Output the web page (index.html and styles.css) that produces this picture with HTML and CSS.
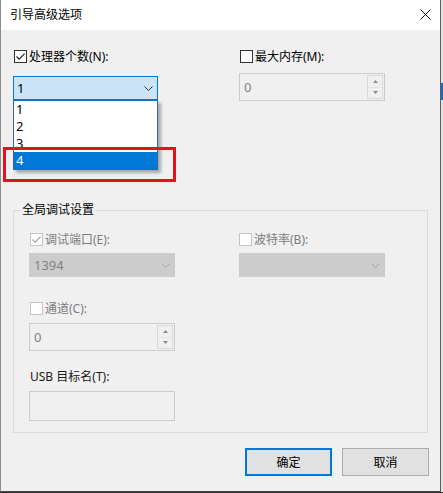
FILE: index.html
```html
<!DOCTYPE html>
<html lang="zh-CN">
<head>
<meta charset="utf-8">
<title>引导高级选项</title>
<link rel="stylesheet" href="styles.css">
</head>
<body>
<div class="screen">
  <div class="window">
    <div class="titlebar">
      <span class="title">引导高级选项</span>
      <svg class="close" width="11" height="11" viewBox="0 0 11 11"><path d="M0.5 0.5 L10.5 10.5 M10.5 0.5 L0.5 10.5" stroke="#111" stroke-width="1" fill="none"/></svg>
    </div>
    <div class="content">
      <div class="top">
        <div class="col">
          <div class="chk">
            <span class="box"><svg width="11" height="11" viewBox="0 0 11 11"><path d="M1.5 5.5 L4.2 8.2 L9.6 2.6" stroke="#222" stroke-width="1.2" fill="none"/></svg></span>
            <span>处理器个数(N):</span>
          </div>
          <div class="combo active">
            <span>1</span>
            <svg class="chev" width="9" height="5" viewBox="0 0 9 5"><path d="M0.5 0.5 L4.5 4.5 L8.5 0.5" stroke="#333" stroke-width="1" fill="none"/></svg>
            <ul class="droplist">
              <li>1</li>
              <li>2</li>
              <li>3</li>
              <li class="sel">4</li>
            </ul>
          </div>
        </div>
        <div class="col">
          <div class="chk">
            <span class="box"></span>
            <span>最大内存(M):</span>
          </div>
          <div class="spin">
            <span class="val">0</span>
            <div class="updown">
              <span class="half"><svg width="5" height="3" viewBox="0 0 5 3"><path d="M0 3 L2.5 0 L5 3Z" fill="#8a8a8a"/></svg></span>
              <span class="half"><svg width="5" height="3" viewBox="0 0 5 3"><path d="M0 0 L2.5 3 L5 0Z" fill="#8a8a8a"/></svg></span>
            </div>
          </div>
        </div>
      </div>

      <fieldset class="group">
        <legend>全局调试设置</legend>
        <div class="inner">
          <div class="ggrid">
            <div class="col">
              <div class="chk off">
                <span class="box dis"><svg width="11" height="11" viewBox="0 0 11 11"><path d="M1.5 5.5 L4.2 8.2 L9.6 2.6" stroke="#a3a3a3" stroke-width="1.2" fill="none"/></svg></span>
                <span>调试端口(E):</span>
              </div>
              <div class="combo disabled">
                <span>1394</span>
                <svg class="chev" width="9" height="5" viewBox="0 0 9 5"><path d="M0.5 0.5 L4.5 4.5 L8.5 0.5" stroke="#a8a8a8" stroke-width="1" fill="none"/></svg>
              </div>
            </div>
            <div class="col">
              <div class="chk off nudge">
                <span class="box dis"></span>
                <span>波特率(B):</span>
              </div>
              <div class="combo disabled">
                <span></span>
                <svg class="chev" width="9" height="5" viewBox="0 0 9 5"><path d="M0.5 0.5 L4.5 4.5 L8.5 0.5" stroke="#a8a8a8" stroke-width="1" fill="none"/></svg>
              </div>
            </div>
          </div>

          <div class="chk off channel">
            <span class="box dis"></span>
            <span>通道(C):</span>
          </div>
          <div class="spin small">
            <span class="val">0</span>
            <div class="updown">
              <span class="half"><svg width="5" height="3" viewBox="0 0 5 3"><path d="M0 3 L2.5 0 L5 3Z" fill="#8a8a8a"/></svg></span>
              <span class="half"><svg width="5" height="3" viewBox="0 0 5 3"><path d="M0 0 L2.5 3 L5 0Z" fill="#8a8a8a"/></svg></span>
            </div>
          </div>

          <div class="usb">USB 目标名(T):</div>
          <div class="textbox"></div>
        </div>
      </fieldset>

      <div class="buttons">
        <button class="btn default">确定</button>
        <button class="btn">取消</button>
      </div>
    </div>
    <div class="highlight"></div>
  </div>
  <div class="strip"><div class="blue"></div></div>
</div>
</body>
</html>
```

FILE: styles.css
```css
html, body {
  margin: 0;
  padding: 0;
}
body {
  width: 443px;
  height: 493px;
  overflow: hidden;
  background: #2e2e2e;
  font-family: "Segoe UI", "Noto Sans", "Noto Sans CJK SC", sans-serif;
  font-size: 12px;
  color: #000;
}
.screen {
  display: flex;
  height: 492px;
}
.window {
  position: relative;
  width: 441px;
  height: 492px;
  box-sizing: border-box;
  border-left: 1px solid #8d8d8d;
  border-right: 1px solid #5c5c5c;
  border-bottom: 1px solid #474747;
  background: #f0f0f0;
  display: flex;
  flex-direction: column;
}
.strip {
  width: 2px;
  height: 492px;
  background: #e4e4e4;
}
.strip .blue {
  margin-top: 83px;
  height: 17px;
  background: #1d6bb4;
}

/* title bar */
.titlebar {
  height: 30px;
  flex: none;
  background: #ffffff;
  display: flex;
  align-items: center;
  justify-content: space-between;
  padding: 0 9px;
}
.title {
  font-size: 12px;
  line-height: 16px;
  margin-top: -1px;
}
.close {
  display: block;
  margin-top: -1px;
}

/* content */
.content {
  padding: 20px 12px 0 12px;
}
.top {
  display: grid;
  grid-template-columns: 145px 146px;
  column-gap: 81px;
}
.col {
  display: flex;
  flex-direction: column;
}

/* checkbox */
.chk {
  display: flex;
  align-items: center;
  height: 13px;
  gap: 2px;
  margin-left: 1px;
  line-height: 16px;
  white-space: nowrap;
}
.chk.off {
  color: #7d7d7d;
}
.box {
  width: 13px;
  height: 13px;
  box-sizing: border-box;
  border: 1px solid #333333;
  background: #ffffff;
  display: flex;
  align-items: center;
  justify-content: center;
  flex: none;
}
.box svg {
  display: block;
}
.box.dis {
  border-color: #c6c6c6;
}

/* combo */
.combo {
  position: relative;
  margin-top: 13px;
  height: 24px;
  box-sizing: border-box;
  display: flex;
  align-items: center;
  justify-content: space-between;
  padding: 0 4px 0 3px;
  font-size: 13px;
}
.combo.active {
  border: 1px solid #0078d7;
  background: #cce4f7;
}
.combo.disabled {
  margin-top: 7px;
  border: 1px solid #cccccc;
  background: #cccccc;
  color: #838383;
  padding-left: 4px;
}
.chev {
  display: block;
}

/* drop-down list */
.droplist {
  position: absolute;
  left: -1px;
  top: 23px;
  width: 145px;
  box-sizing: border-box;
  margin: 0;
  padding: 0;
  list-style: none;
  background: #ffffff;
  border: 1px solid #2a6aa8;
  box-shadow: 3px 3px 3px rgba(0, 0, 0, 0.3);
  z-index: 2;
}
.droplist li {
  height: 17px;
  line-height: 17px;
  padding-left: 2px;
  font-size: 13px;
  color: #000;
}
.droplist li.sel {
  background: #0078d7;
  color: #ffffff;
}

/* spin box */
.spin {
  margin-top: 10px;
  height: 28px;
  box-sizing: border-box;
  border: 1px solid #cccccc;
  background: #f0f0f0;
  display: flex;
  align-items: stretch;
  font-size: 13px;
  color: #838383;
}
.spin .val {
  flex: 1;
  display: flex;
  align-items: center;
  padding-left: 4px;
}
.updown {
  width: 16px;
  margin: 1px 1px 1px 0;
  box-sizing: border-box;
  border: 1px solid #dadada;
  display: flex;
  flex-direction: column;
}
.updown .half {
  flex: 1;
  display: flex;
  align-items: center;
  justify-content: center;
}
.updown .half + .half {
  border-top: 1px solid #e6e6e6;
}
.updown svg {
  display: block;
}

/* group */
.group {
  margin: 101px 0 0 0;
  padding: 0 0 11px 0;
  width: 415px;
  box-sizing: border-box;
  border: 1px solid #dcdcdc;
  min-width: 0;
}
.group legend {
  margin-left: 7px;
  padding: 0 1px;
  line-height: 16px;
  font-size: 12px;
  color: #000;
}
.inner {
  padding: 15px 0 0 15px;
  display: flex;
  flex-direction: column;
  align-items: flex-start;
}
.ggrid {
  display: grid;
  grid-template-columns: 146px 146px;
  column-gap: 64px;
}
.chk.nudge {
  margin-left: 0;
}
.chk.channel {
  margin-top: 25px;
}
.spin.small {
  margin-top: 8px;
  width: 146px;
}
.usb {
  margin-top: 18px;
  margin-left: 1px;
  line-height: 16px;
  color: #1a1a1a;
}
.textbox {
  margin-top: 6px;
  width: 146px;
  height: 30px;
  box-sizing: border-box;
  border: 1px solid #cccccc;
  background: #f0f0f0;
}

/* buttons */
.buttons {
  display: flex;
  justify-content: flex-end;
  gap: 10px;
  margin-top: 15px;
  margin-right: -1px;
}
.btn {
  width: 87px;
  height: 28px;
  box-sizing: border-box;
  border: 1px solid #adadad;
  background: #e1e1e1;
  font-family: "Segoe UI", "Noto Sans", "Noto Sans CJK SC", sans-serif;
  font-size: 12px;
  color: #000;
  padding: 0;
  margin: 0;
}
.btn.default {
  border: 2px solid #0078d7;
}

/* red annotation */
.highlight {
  position: absolute;
  left: 2px;
  top: 147px;
  width: 173px;
  height: 35px;
  box-sizing: border-box;
  border: 3px solid #e3121c;
  z-index: 5;
}
```
